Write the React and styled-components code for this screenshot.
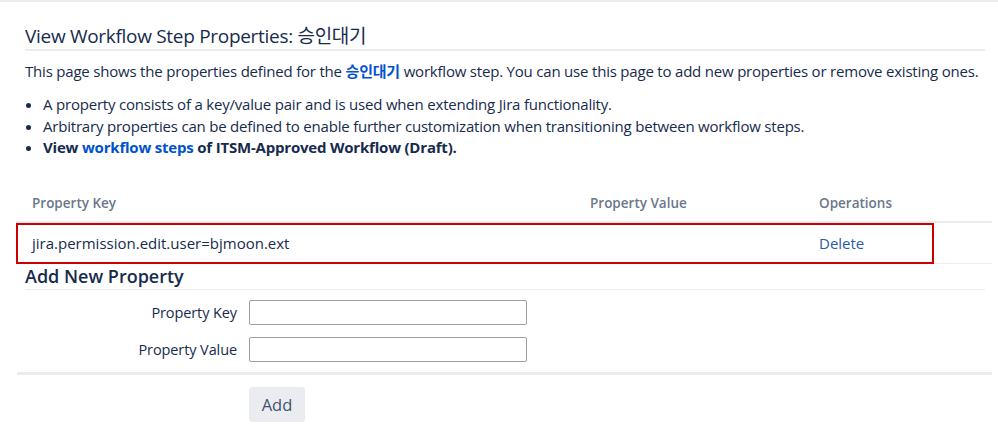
import React from "react";
import styled, { createGlobalStyle } from "styled-components";

const Global = createGlobalStyle`
  html, body { margin: 0; padding: 0; background: #fff; }
  body {
    font-family: "Open Sans", "Noto Sans CJK KR", sans-serif;
    color: #172b4d;
  }
  * { box-sizing: border-box; }
`;

const Page = styled.div`
  width: 998px;
  height: 438px;
  border-top: 2px solid #ececec;
  padding: 0 6px 0 16px;
  overflow: hidden;
`;

const Section = styled.div`
  margin: 0 7px 0 9px;
`;

const Title = styled.h2`
  margin: 22px 0 0;
  font-size: 19px;
  line-height: 24px;
  font-weight: 400;
  letter-spacing: -0.3px;
  padding-bottom: 1px;
  border-bottom: 2px solid #ebecf0;
  color: #172b4d;
`;

const Para = styled.p`
  margin: 9px 0 0;
  font-size: 15px;
  line-height: 22px;
  letter-spacing: -0.2px;
  color: #172b4d;
  white-space: nowrap;
`;

const StepName = styled.b`
  color: #0052cc;
  font-weight: 700;
`;

const List = styled.ul`
  margin: 12px 0 0;
  padding-left: 18px;
  font-size: 15px;
  line-height: 21.5px;
  letter-spacing: -0.2px;
`;

const Item = styled.li`
  font-weight: ${(p) => (p.$bold ? 700 : 400)};
`;

const Link = styled.a`
  color: #0052cc;
  text-decoration: none;
  cursor: pointer;
`;

const Table = styled.div`
  margin-top: 27px;
`;

const Row = styled.div`
  position: relative;
  display: grid;
  grid-template-columns: 558px 229px 1fr;
  align-items: center;
  height: ${(p) => p.$h}px;
  border-bottom: ${(p) => p.$line};
`;

const HeadCell = styled.div`
  padding-left: 16px;
  font-size: 13.5px;
  font-weight: 600;
  color: #6b778c;
`;

const Cell = styled.div`
  padding-left: 16px;
  font-size: 15px;
  color: #172b4d;
`;

const DeleteLink = styled(Link)`
  color: #2d5ba8;
`;

const Highlight = styled.div`
  position: absolute;
  left: 0;
  top: 0;
  width: 918px;
  height: 41px;
  border: 2px solid #cc0000;
  pointer-events: none;
`;

const SubTitle = styled.h3`
  margin: 1px 0 0;
  font-size: 18px;
  line-height: 22px;
  font-weight: 600;
  border-bottom: 1px solid #ebecf0;
  padding-bottom: 2px;
`;

const Form = styled.div`
  display: grid;
  grid-template-columns: 221px 278px;
  column-gap: 12px;
  row-gap: 12px;
  align-items: center;
  margin-top: 10px;
`;

const Label = styled.label`
  text-align: right;
  font-size: 14.5px;
  letter-spacing: -0.1px;
  color: #172b4d;
`;

const Input = styled.input`
  width: 278px;
  height: 25px;
  border: 1px solid #a0a0a0;
  border-radius: 2px;
  padding: 0 4px;
  font: inherit;
`;

const Separator = styled.div`
  margin: 10px 0 0 1px;
  border-top: 3px solid #ebecf0;
`;

const Buttons = styled.div`
  padding: 12px 0 0 233px;
`;

const Button = styled.button`
  width: 56px;
  height: 35px;
  border: none;
  border-radius: 3px;
  background: #ebecf0;
  color: #42526e;
  font-family: "Open Sans", sans-serif;
  font-size: 16.5px;
`;

export default function App() {
  return (
    <>
      <Global />
      <Page>
        <Section>
          <Title>View Workflow Step Properties: 승인대기</Title>
          <Para>
            This page shows the properties defined for the <StepName>승인대기</StepName> workflow step. You can use this page to add new properties or remove existing ones.
          </Para>
          <List>
            <Item>A property consists of a key/value pair and is used when extending Jira functionality.</Item>
            <Item>Arbitrary properties can be defined to enable further customization when transitioning between workflow steps.</Item>
            <Item $bold>
              View <Link>workflow steps</Link> of ITSM-Approved Workflow (Draft).
            </Item>
          </List>
        </Section>
        <Table>
          <Row $h={37} $line="2px solid #ebecf0">
            <HeadCell>Property Key</HeadCell>
            <HeadCell>Property Value</HeadCell>
            <HeadCell>Operations</HeadCell>
          </Row>
          <Row $h={41} $line="1px solid #ebecf0">
            <Cell>jira.permission.edit.user=bjmoon.ext</Cell>
            <Cell></Cell>
            <Cell>
              <DeleteLink>Delete</DeleteLink>
            </Cell>
            <Highlight />
          </Row>
        </Table>
        <Section>
          <SubTitle>Add New Property</SubTitle>
        </Section>
        <Form>
          <Label>Property Key</Label>
          <Input />
          <Label>Property Value</Label>
          <Input />
        </Form>
        <Separator />
        <Buttons>
          <Button>Add</Button>
        </Buttons>
      </Page>
    </>
  );
}
